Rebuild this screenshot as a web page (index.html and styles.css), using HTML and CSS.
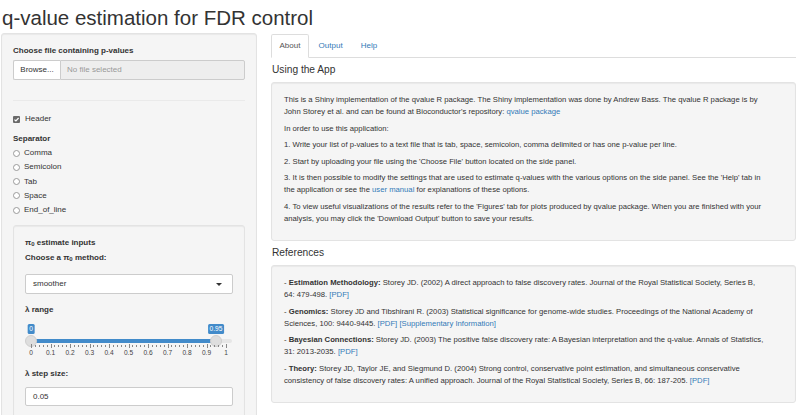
FILE: index.html
```html
<!DOCTYPE html>
<html>
<head>
<meta charset="utf-8">
<link rel="stylesheet" href="styles.css">
</head>
<body>
<div class="page">
  <h2 class="title">q-value estimation for FDR control</h2>
  <div class="layout">
    <aside class="sidebar well">
      <label class="ctl-label">Choose file containing p-values</label>
      <div class="file-group">
        <span class="browse">Browse...</span>
        <span class="file-name">No file selected</span>
      </div>
      <div class="progress-space"></div>
      <hr class="sep">
      <div class="check-row"><span class="checkbox"><svg width="7" height="7" viewBox="0 0 7 7"><path d="M1.5 3.6 L2.9 5 L5.6 2" fill="none" stroke="#fff" stroke-width="1.2"/></svg></span><span>Header</span></div>
      <div class="ctl-label sep-label">Separator</div>
      <div class="radios">
        <div class="radio-row"><span class="radio"></span><span>Comma</span></div>
        <div class="radio-row"><span class="radio"></span><span>Semicolon</span></div>
        <div class="radio-row"><span class="radio"></span><span>Tab</span></div>
        <div class="radio-row"><span class="radio"></span><span>Space</span></div>
        <div class="radio-row"><span class="radio"></span><span>End_of_line</span></div>
      </div>
      <div class="well inner">
        <div class="ctl-label">π<sub>0</sub> estimate inputs</div>
        <div class="ctl-label method-label">Choose a π<sub>0</sub> method:</div>
        <div class="select"><span>smoother</span><span class="caret"></span></div>
        <div class="ctl-label range-label">λ range</div>
        <div class="slider">
          <div class="track"></div>
          <div class="fill"></div>
          <div class="tip tip-a">0</div>
          <div class="tip tip-b">0.95</div>
          <div class="knob knob-a"></div>
          <div class="knob knob-b"></div>
          <div class="grid" id="grid"></div>
        </div>
        <div class="ctl-label step-label">λ step size:</div>
        <div class="text-input">0.05</div>
      </div>
    </aside>
    <main class="main">
      <ul class="tabs">
        <li class="tab active">About</li>
        <li class="tab">Output</li>
        <li class="tab">Help</li>
      </ul>
      <h4 class="section-title">Using the App</h4>
      <div class="well content">
        <p>This is a Shiny implementation of the qvalue R package. The Shiny implementation was done by Andrew Bass. The qvalue R package is by John Storey et al. and can be found at Bioconductor's repository: <a>qvalue package</a></p>
        <p>In order to use this application:</p>
        <p>1. Write your list of p-values to a text file that is tab, space, semicolon, comma delimited or has one p-value per line.</p>
        <p>2. Start by uploading your file using the 'Choose File' button located on the side panel.</p>
        <p>3. It is then possible to modify the settings that are used to estimate q-values with the various options on the side panel. See the 'Help' tab in the application or see the <a>user manual</a> for explanations of these options.</p>
        <p>4. To view useful visualizations of the results refer to the 'Figures' tab for plots produced by qvalue package. When you are finished with your analysis, you may click the 'Download Output' button to save your results.</p>
      </div>
      <h4 class="section-title">References</h4>
      <div class="well content">
        <p><span>- </span><b>Estimation Methodology:</b> <span>Storey JD. (2002) A direct approach to false discovery rates. Journal of the Royal Statistical Society, Series B, 64: 479-498.</span> <a>[PDF]</a></p>
        <p><span>- </span><b>Genomics:</b> <span>Storey JD and Tibshirani R. (2003) Statistical significance for genome-wide studies. Proceedings of the National Academy of Sciences, 100: 9440-9445.</span> <a>[PDF]</a> <a>[Supplementary Information]</a></p>
        <p><span>- </span><b>Bayesian Connections:</b> <span>Storey JD. (2003) The positive false discovery rate: A Bayesian interpretation and the q-value. Annals of Statistics, 31: 2013-2035.</span> <a>[PDF]</a></p>
        <p><span>- </span><b>Theory:</b> <span>Storey JD, Taylor JE, and Siegmund D. (2004) Strong control, conservative point estimation, and simultaneous conservative consistency of false discovery rates: A unified approach. Journal of the Royal Statistical Society, Series B, 66: 187-205.</span> <a>[PDF]</a></p>
      </div>
    </main>
  </div>
</div>
<script src="script.js"></script>
</body>
</html>
```
FILE: script.js
```js
(function () {
  var grid = document.getElementById('grid');
  for (var i = 0; i <= 50; i++) {
    var v = i / 50;
    var x = 6 + v * 195;
    var t = document.createElement('div');
    var major = i % 5 === 0;
    t.className = major ? 'tick major' : 'tick';
    t.style.left = x + 'px';
    grid.appendChild(t);
    if (major) {
      var l = document.createElement('div');
      l.className = 'tick-label';
      l.style.left = x + 'px';
      var n = i / 50;
      l.textContent = n === 0 ? '0' : (n === 1 ? '1' : n.toFixed(1));
      grid.appendChild(l);
    }
  }
})();
```
FILE: styles.css
```css
* { box-sizing: border-box; }
html, body { margin: 0; padding: 0; background: #fff; }
body {
  font-family: "Liberation Sans", Arial, sans-serif;
  font-size: 8px;
  line-height: 12px;
  color: #333;
  overflow: hidden;
}
.page { padding: 0 4px 0 1px; }
.title {
  font-size: 20.5px;
  font-weight: normal;
  line-height: 22px;
  margin: 7px 0 4px 1px;
  color: #333;
}
.layout { display: flex; gap: 14px; align-items: flex-start; }
.well {
  background: #f5f5f5;
  border: 1px solid #e3e3e3;
  border-radius: 3px;
  box-shadow: inset 0 1px 1px rgba(0,0,0,.05);
  padding: 11px;
}
.sidebar { width: 256px; flex: none; height: 420px; }
.ctl-label { display: block; font-weight: bold; }
.ctl-label sub { font-size: 6px; line-height: 0; vertical-align: -1px; }
.file-group {
  display: flex;
  height: 20px;
  margin-top: 3px;
}
.browse {
  width: 47px;
  background: #fff;
  border: 1px solid #ccc;
  border-right: none;
  border-radius: 2px 0 0 2px;
  display: flex; align-items: center; justify-content: center;
}
.file-name {
  flex: 1;
  background: #eee;
  border: 1px solid #ccc;
  border-radius: 0 2px 2px 0;
  color: #999;
  padding-left: 6px;
  display: flex; align-items: center;
}
.progress-space { height: 20px; }
.sep { border: none; border-top: 1px solid #eaeaea; margin: 0 0 12px 0; }
.check-row, .radio-row { display: flex; align-items: center; height: 12px; }
.checkbox {
  width: 7px; height: 7px; border-radius: 1px; background: #6a6a6a;
  margin-right: 5px; display: flex;
}
.checkbox svg { display: block; }
.sep-label { margin-top: 8px; }
.radios { display: flex; flex-direction: column; gap: 2.3px; margin-top: 2px; }
.radio {
  width: 7px; height: 7px; border-radius: 50%; border: 1px solid #9a9a9a; background: #fff;
  margin-right: 4px;
}
.inner { margin-top: 9px; height: 240px; padding-top: 11px; }
.method-label { margin-top: 3px; }
.select {
  margin-top: 10px;
  height: 20px;
  background: #fff;
  border: 1px solid #ccc;
  border-radius: 2px;
  display: flex; align-items: center; justify-content: space-between;
  padding: 0 10px 0 7px;
}
.caret {
  width: 0; height: 0;
  border-left: 3px solid transparent;
  border-right: 3px solid transparent;
  border-top: 3px solid #333;
}
.range-label { margin-top: 10px; }
.slider { position: relative; height: 44px; }
.track { position: absolute; left: 2px; right: 1px; top: 23px; height: 4px; background: #e6e6e6; border-radius: 2px; }
.fill { position: absolute; left: 6px; width: 185px; top: 23px; height: 4px; background: #428bca; }
.knob {
  position: absolute; top: 19px; width: 12px; height: 12px; border-radius: 50%;
  background: #dedede; border: 1px solid #cfcfcf;
}
.knob-a { left: 0; }
.knob-b { left: 185px; }
.tip {
  position: absolute; top: 8px; height: 10px; line-height: 10px;
  background: #428bca; color: #fff; font-size: 6.6px; padding: 0 1.5px;
  border-radius: 1.5px; transform: translateX(-50%);
}
.tip-a { left: 6px; }
.tip-b { left: 191px; }
.grid { position: absolute; left: 0; top: 28px; width: 100%; height: 16px; }
.tick { position: absolute; top: 1px; width: 1px; height: 2px; background: #888; }
.tick.major { top: 0; height: 4px; }
.tick-label {
  position: absolute; top: 5px; font-size: 6.6px; line-height: 8px; color: #444;
  transform: translateX(-50%);
}
.step-label { margin-top: 8px; }
.text-input {
  margin-top: 7px;
  height: 19px;
  background: #fff;
  border: 1px solid #ccc;
  border-radius: 2px;
  padding-left: 7px;
  display: flex; align-items: center;
}
.main { flex: 1; padding-top: 1px; }
.tabs {
  list-style: none; margin: 0; padding: 0;
  display: flex; border-bottom: 1px solid #ddd;
}
.tab {
  padding: 5px 7.5px;
  border: 1px solid transparent;
  border-radius: 2.4px 2.4px 0 0;
  margin-bottom: -1px;
  margin-right: 1.2px;
  color: #337ab7;
}
.tab.active {
  background: #fff;
  border-color: #ddd #ddd transparent #ddd;
  color: #555;
}
.section-title {
  font-size: 10.2px;
  font-weight: normal;
  line-height: 12px;
  margin: 6px 0 6px 1px;
}
.content { margin-bottom: 4px; padding: 11px 30px 11px 12px; font-size: 7.7px; }
.content p { margin: 0 0 4.5px 0; }
a { color: #337ab7; text-decoration: none; }
b { font-weight: bold; }
```
